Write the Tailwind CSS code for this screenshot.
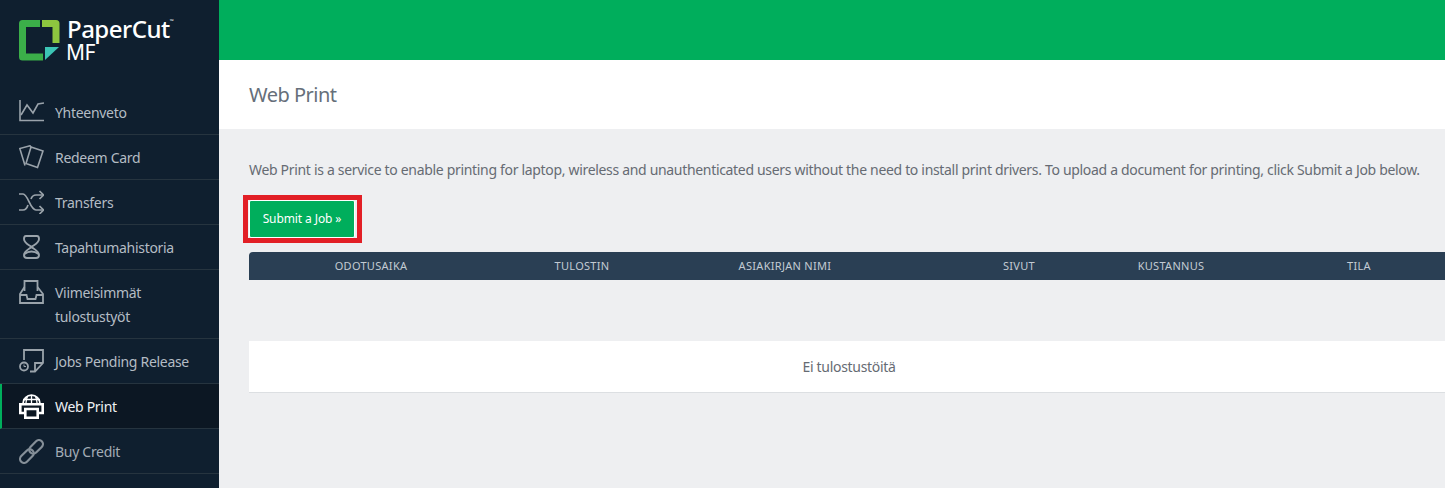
<!DOCTYPE html>
<html lang="en">

<head>
  <meta charset="UTF-8">
  <script src="https://cdn.jsdelivr.net/npm/@tailwindcss/browser@4"></script>
  <title>Web Print</title>
</head>

<body class="font-['Noto_Sans',sans-serif] overflow-hidden">
  <div class="flex h-[488px] w-[1445px] overflow-hidden bg-[#eeeff1]">

    <!-- sidebar -->
    <aside class="w-[219px] shrink-0 h-full bg-[#0f1f2f]">
      <div class="h-[90px] pl-[19px] pt-[20px] flex items-start gap-[7px]">
        <svg width="41" height="41" viewBox="0 0 41 41" fill="none">
          <path d="M21 3.5H3.5V37H24" stroke="#3bae49" stroke-width="7" stroke-linejoin="round" />
          <path d="M23 3.5H37V23" stroke="#8dc63f" stroke-width="7" stroke-linejoin="round" />
          <path d="M26 27H40L26 40Z" fill="#3cc5b5" />
        </svg>
        <div class="text-white">
          <div class="text-[24px] font-medium tracking-[-0.5px] leading-[24px] -mt-[3px]">PaperCut<sup class="text-[5px] align-top relative top-[4px]">™</sup></div>
          <div class="text-[21px] leading-[20px] mt-[1px] -ml-[1px] tracking-[-0.5px]">MF</div>
        </div>
      </div>

      <nav class="text-[14px] tracking-[-0.3px] text-[#b4bcc4]">
        <a class="h-[45px] flex items-center border-b border-[#26343f] pl-[19px]">
          <svg class="w-[25px] h-[22px] mr-[11px] -mt-[3px]" viewBox="0 0 25 22" fill="none" stroke="#9aa3ab" stroke-width="1.6">
            <path d="M1 0V20.5H25" />
            <path d="M2 15L8 5L14 13L19 4L25 3" />
          </svg>
          <span>Yhteenveto</span>
        </a>
        <a class="h-[45px] flex items-center border-b border-[#26343f] pl-[19px]">
          <svg class="w-[25px] h-[24px] mr-[11px]" viewBox="0 0 25 24" fill="none" stroke="#9aa3ab" stroke-width="1.6">
            <path d="M6 20.5L0.8 3.5L11 0.8L12.5 3" />
            <path d="M12 2L24 6L18.5 22.5L7 18.5Z" />
          </svg>
          <span>Redeem Card</span>
        </a>
        <a class="h-[45px] flex items-center border-b border-[#26343f] pl-[19px]">
          <svg class="w-[25px] h-[24px] mr-[11px]" viewBox="0 0 25 24" fill="none" stroke="#9aa3ab" stroke-width="1.7">
            <path d="M0 4H4C9 4 11 20 17 20H24" />
            <path d="M0 20H4C6 20 8 18 9 15M12 9C13 6 15 5 17 5H24" />
            <path d="M20.5 1L24.5 5L20.5 9M20.5 16L24.5 20L20.5 24" />
          </svg>
          <span>Transfers</span>
        </a>
        <a class="h-[45px] flex items-center border-b border-[#26343f] pl-[19px]">
          <svg class="w-[25px] h-[24px] mr-[11px]" viewBox="0 0 25 24" fill="none" stroke="#9aa3ab" stroke-width="1.9">
            <path d="M7 1H18C19.5 1 20 2 20 4C20 8 15 10 12.5 12C15 14 20 16 20 20C20 22 19 23 17 23H8C6 23 5 22 5 20C5 16 10 14 12.5 12C10 10 5 8 5 4C5 2 5.5 1 7 1Z" />
            <path d="M5.5 19C8 17 10 16.5 12.5 16.5C15 16.5 17 17 19.5 19" />
          </svg>
          <span>Tapahtumahistoria</span>
        </a>
        <a class="h-[69px] flex items-start border-b border-[#26343f] pl-[19px] pt-[10px]">
          <svg class="w-[25px] h-[24px] mr-[11px] shrink-0" viewBox="0 0 25 24" fill="none" stroke="#9aa3ab" stroke-width="1.8">
            <path d="M5.5 7L1 14V23H24V14L18.5 7" />
            <path d="M5.5 11V1H18.5V11" />
            <path d="M1 15H7.5L8.5 19H16.5L17.5 15H24" />
          </svg>
          <span class="leading-[24px] pt-[1px]">Viimeisimmät<br>tulostustyöt</span>
        </a>
        <a class="h-[45px] flex items-center border-b border-[#26343f] pl-[19px]">
          <svg class="w-[25px] h-[24px] mr-[11px]" viewBox="0 0 25 24" fill="none" stroke="#9aa3ab" stroke-width="1.8">
            <path d="M5 11V1H24V14L16 22.5H11" />
            <path d="M24 14H16V22.5" />
            <circle cx="5" cy="17.5" r="4" />
            <path d="M5 15.5V17.5H7" stroke-width="1" />
          </svg>
          <span>Jobs Pending Release</span>
        </a>
        <a class="h-[45px] flex items-center border-b border-[#26343f] border-l-[2px] border-l-[#00ae5c] pl-[17px] bg-[#0c1723] text-[#eef1f3]">
          <svg class="w-[25px] h-[25px] mr-[11px]" viewBox="0 0 25 25" fill="none" stroke="#fff" stroke-width="2.6">
            <path d="M4 10C4 5 8 1.2 12.5 1.2C17 1.2 21 5 21 10" stroke-width="1.8" />
            <path d="M12.5 1V9M8.5 2.5C7 5 7 8 7 9M16.5 2.5C18 5 18 8 18 9M4 5.5H21" stroke-width="1.3" />
            <path d="M6 19H1.3V10.3H23.7V19H19" />
            <path d="M6.3 15H18.7V23.7H6.3Z" />
          </svg>
          <span>Web Print</span>
        </a>
        <a class="h-[45px] flex items-center border-b border-[#26343f] pl-[19px] text-[#a3acb5]">
          <svg class="w-[25px] h-[25px] mr-[11px]" viewBox="0 0 25 25" fill="none" stroke="#858f98" stroke-width="2.2">
            <g transform="rotate(-45 12.5 12.5)">
              <rect x="-2" y="8.5" width="16" height="8" rx="4" />
              <rect x="11" y="8.5" width="16" height="8" rx="4" />
            </g>
          </svg>
          <span>Buy Credit</span>
        </a>
      </nav>
    </aside>

    <!-- main -->
    <main class="flex-1 min-w-0 text-[#666b73] overflow-hidden">
      <div class="h-[60px] bg-[#00ae5c]"></div>
      <div class="h-[69px] bg-white flex items-center pl-[30px] text-[20px] tracking-[-0.5px] text-[#666f7a]">Web Print</div>

      <div class="pl-[30px]">
        <p class="text-[14px] tracking-[-0.32px] mt-[31px] leading-[20px] whitespace-nowrap">Web Print is a service to enable printing for laptop, wireless and unauthenticated users without the need to install print drivers. To upload a document for printing, click Submit a Job below.</p>

        <div class="mt-[15px] -ml-[6px] w-[119px] h-[48px] border-[5px] border-[#e21f26] pl-[1px] pr-[2px]">
          <a class="flex items-center justify-center w-full h-full bg-[#00ae5c] border border-white rounded-[2px] text-white text-[12px] tracking-[-0.1px]">Submit a Job »</a>
        </div>

        <div class="mt-[9px] w-[1266px] h-[28px] bg-[#2a3f54] rounded-tl-[4px] text-[#c3cbd3] text-[11px] tracking-[0.3px]">
          <div class="grid h-full items-center justify-items-center grid-cols-[244px_178px_228px_240px_64px_312px] whitespace-nowrap">
            <span>ODOTUSAIKA</span>
            <span>TULOSTIN</span>
            <span>ASIAKIRJAN NIMI</span>
            <span>SIVUT</span>
            <span>KUSTANNUS</span>
            <span>TILA</span>
          </div>
        </div>

        <div class="mt-[61px] w-[1200px] h-[52px] bg-white border-b border-[#dcdfe2] flex items-center justify-center text-[14px] tracking-[-0.3px]">
          <span>Ei tulostustöitä</span>
        </div>
      </div>
    </main>
  </div>
</body>

</html>
